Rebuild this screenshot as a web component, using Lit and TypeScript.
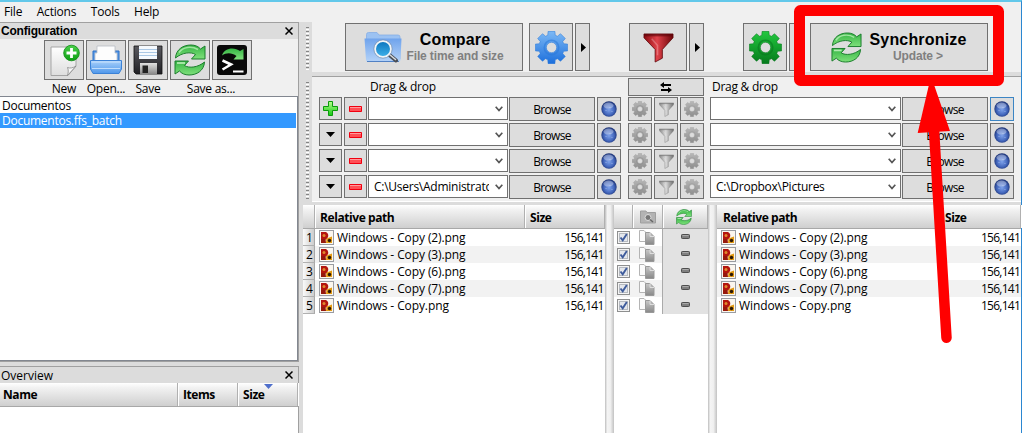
import { LitElement, html, css, svg } from "lit";
import { customElement } from "lit/decorators.js";

const gearPath = (() => {
  const pts: string[] = [];
  const teeth = 8;
  for (let i = 0; i < teeth; i++) {
    const base = (i * 360) / teeth;
    for (const [off, r] of [[-17, 12.4], [-12, 16], [12, 16], [17, 12.4]]) {
      const a = ((base + off - 90) * Math.PI) / 180;
      pts.push(`${(16 + r * Math.cos(a)).toFixed(2)} ${(16 + r * Math.sin(a)).toFixed(2)}`);
    }
  }
  return `M${pts.join("L")}ZM16 11a5 5 0 1 0 0 10a5 5 0 1 0 0-10Z`;
})();

const gear = (size: number, fill: string, edge: string) => html`
  <svg width=${size} height=${size} viewBox="0 0 32 32">
    <path d=${gearPath} fill=${fill} stroke=${edge} stroke-width=".5" fill-rule="evenodd" stroke-linejoin="round" />
    <circle cx="16" cy="16" r="7" fill="none" stroke=${edge} stroke-width="1.6" opacity=".55" />
  </svg>`;

const funnel = (size: number, fill: string, edge: string) => html`
  <svg width=${size} height=${size} viewBox="0 0 32 32">
    <path d="M1 2H31V6L20 18V27L12.500 31V18L1 6Z" fill=${fill} stroke=${edge} stroke-width=".8" />
    <path d="M1 2H31V4.500H1Z" fill=${edge} opacity=".6" />
    <path d="M9 7L15 14V24" fill="none" stroke="#fff" stroke-width="1.600" opacity=".25" />
  </svg>`;

const syncShape = svg`
  <path d="M1.500 14C2 5.500 9 1 17 1C21 1 24.500 2.500 26.500 5L31 2V15H17.500L21.500 10.500C17 7.500 8 8.500 1.500 14Z" fill="url(#sync)" stroke="#1b7d2c" stroke-width="1" stroke-linejoin="round" />
  <path d="M30.500 18C30 26.500 23 31 15 31C11 31 7.500 29.500 5.500 27L1 30V17H14.500L10.500 21.500C15 24.500 24 23.500 30.500 18Z" fill="url(#sync)" stroke="#1b7d2c" stroke-width="1" stroke-linejoin="round" />
  <path d="M5 8.500C9 3 17 1.500 24 5.500" fill="none" stroke="#c6f5c2" stroke-width="1.500" opacity=".7" />
  <path d="M3 19H11" fill="none" stroke="#e0fcd8" stroke-width="1.800" opacity=".7" />`;
const sync = (size: number) => html`<svg width=${size} height=${size} viewBox="0 0 32 32">${syncShape}</svg>`;

const newIcon = html`
  <svg width="32" height="34" viewBox="0 0 32 34">
    <path d="M3 4H28V23L20 32.500H3Z" fill="url(#paper)" stroke="#a5a5a5" />
    <path d="M19.500 32.500C20.500 29 20.500 27 19.500 24.500C22 25.500 25 25 28 23Z" fill="#f8f8f8" stroke="#888" stroke-width=".8" />
    <circle cx="23.500" cy="10" r="7.800" fill="url(#badge)" stroke="#0d8a12" stroke-width=".8" />
    <path d="M23.500 5V15M18.500 10H28.500" stroke="#fff" stroke-width="2.800" />
  </svg>`;

const openIcon = html`
  <svg width="34" height="32" viewBox="0 0 34 32">
    <path d="M4 7H30V18H4Z" fill="#5a9be8" stroke="#2b6fc4" />
    <path d="M8 2H26V9H28V20H6V9H8Z" fill="#fdfdfd" stroke="#b7bcc4" stroke-width=".8" />
    <path d="M1.500 16.500H32.500V25L30 29.500H4L1.500 25Z" fill="url(#tray)" stroke="#3c82d6" />
    <path d="M2.500 18H31.500M3 24.500H31" stroke="#d4e9ff" opacity=".8" />
  </svg>`;

const saveIcon = html`
  <svg width="30" height="32" viewBox="0 0 30 32">
    <path d="M1 2H29V30H3L1 28Z" fill="url(#disk)" stroke="#111" stroke-width=".8" />
    <path d="M6 2H24V15H6Z" fill="#f5f9fd" />
    <path d="M6 5.500H24M6 8.500H24M6 11.500H24" stroke="#aac8e5" />
    <path d="M7 19H24V30H7Z" fill="url(#steel)" />
    <path d="M9.500 21.500H15V29H9.500Z" fill="#222" />
  </svg>`;

const batchIcon = html`
  <svg width="32" height="32" viewBox="0 0 32 32">
    <rect x="1" y="1" width="30" height="30" rx="3" fill="#080808" />
    <path d="M6 11.500C8 4 18 2.500 24 7L27.500 5V15.500H17.500L20.500 12C16 8.500 10 8.500 6 11.500Z" fill="url(#sync)" />
    <path d="M6.500 16.500L15 20.500L6.500 25.500" fill="none" stroke="#fff" stroke-width="2.600" />
    <path d="M17 27.500H27.500" stroke="#fff" stroke-width="2" />
  </svg>`;

const compareIcon = html`
  <svg width="38" height="32" viewBox="0 0 38 32">
    <path d="M2.500 7V3.500Q2.500 1.500 4.500 1.500H13L15 4H34Q36 4 36 6V28H2.500Z" fill="#9cc2f2" stroke="#86afe6" stroke-width=".8" />
    <path d="M.5 7.500H37.500L36.500 29Q36.500 30.500 34 30.500H4Q2 30.500 2 29Z" fill="url(#folder)" />
    <path d="M3 30.500H35" stroke="#5181c4" />
    <path d="M25.500 24L32 29.500" stroke="#4a4e55" stroke-width="4" stroke-linecap="round" />
    <path d="M25.500 23.500L31.500 28.500" stroke="#d5d9de" stroke-width="1.600" stroke-linecap="round" />
    <circle cx="19" cy="18" r="8" fill="url(#lens)" stroke="#f1f5f8" stroke-width="2" />
    <circle cx="19" cy="18" r="9.200" fill="none" stroke="#7c93ad" stroke-width=".7" />
  </svg>`;

const globe = html`
  <svg width="16" height="16" viewBox="0 0 16 16">
    <circle cx="8" cy="8" r="7.700" fill="url(#globe)" />
    <ellipse cx="7.500" cy="4.600" rx="5" ry="3" fill="#fff" opacity=".35" />
    <path d="M4.500 9.500h1M10.500 10.500h1M8.500 6.500h1" stroke="#dce8ff" opacity=".45" />
  </svg>`;

const plus = html`
  <svg width="15" height="15" viewBox="0 0 15 15">
    <path d="M5.500 .5H9.500V5.500H14.500V9.500H9.500V14.500H5.500V9.500H.5V5.500H5.500Z" fill="url(#plus)" stroke="#0b9a0b" />
  </svg>`;
const minus = html`
  <svg width="13" height="6" viewBox="0 0 13 6">
    <path d="M.5 .5H12.500V5.500H.5Z" fill="#ff4f55" stroke="#f00010" />
    <path d="M1 1.500H12" stroke="#ff9a9c" />
  </svg>`;
const down = html`<svg width="9" height="5" viewBox="0 0 9 5"><path d="M0 0H9L4.500 5Z" /></svg>`;
const right = html`<svg width="5" height="9" viewBox="0 0 5 9"><path d="M0 0L5 4.500L0 9Z" /></svg>`;
const chevron = html`
  <svg width="8" height="6" viewBox="0 0 8 6"><path d="M.7 .8L4 4.500L7.300 .8" fill="none" stroke="#555" stroke-width="1.700" /></svg>`;
const swap = html`
  <svg width="12" height="11" viewBox="0 0 12 11">
    <path d="M0 3L4 0V2H11V4H4V6ZM12 8L8 5V7H1V9H8V11Z" />
  </svg>`;
const cross = html`
  <svg width="8" height="8" viewBox="0 0 8 8"><path d="M.5 .5L7.500 7.500M7.500 .5L.5 7.500" stroke="#000" stroke-width="1.500" /></svg>`;

const fileIcon = html`
  <svg width="15" height="15" viewBox="0 0 15 15">
    <rect x=".5" y=".5" width="14" height="14" fill="#fbf6ee" stroke="#9a9ca1" />
    <path d="M2 2H7Q10 3.500 9 7L7.500 9.500H2Z" fill="#b3150e" />
    <circle cx="5" cy="5.500" r="1.500" fill="#e08a2c" />
    <path d="M7.500 8.500L13 6.500V13H7Z" fill="#e39a12" />
    <path d="M2 9H6.500L7 13H2Z" fill="#96180c" />
    <circle cx="10.500" cy="10.500" r="1.700" fill="#2a1605" />
  </svg>`;

const checkbox = html`
  <svg width="13" height="13" viewBox="0 0 13 13">
    <rect x=".5" y=".5" width="12" height="12" fill="#f4f4f4" stroke="#8e8f8f" />
    <rect x="2.500" y="2.500" width="8" height="8" fill="#e4e7ec" stroke="#b6bac0" />
    <path d="M3.500 6.500L5.700 9.300L9.800 3" fill="none" stroke="#3f5c9c" stroke-width="1.900" />
  </svg>`;

const copies = html`
  <svg width="16" height="15" viewBox="0 0 16 15">
    <path d="M.5 .5H5L7.500 3V11.500H.5Z" fill="#fbfbfb" stroke="#b4b4b4" />
    <path d="M6.500 2.500H11L15 6.500V14.500H6.500Z" fill="url(#copy)" stroke="#999" />
    <path d="M11 2.500V6.500H15" fill="none" stroke="#ddd" />
  </svg>`;

const equalBar = html`
  <svg width="9" height="5" viewBox="0 0 9 5">
    <rect x=".5" y=".5" width="8" height="4" rx=".8" fill="#808080" stroke="#4e4e4e" />
    <path d="M1.500 1.500H7.500" stroke="#aaa" />
  </svg>`;

const cameraIcon = html`
  <svg width="16" height="14" viewBox="0 0 16 14">
    <path d="M.5 1H6L7 2.500H15.500V13H.5Z" fill="#b3b3b3" stroke="#9f9f9f" />
    <circle cx="8" cy="7.500" r="3" fill="#777" stroke="#ddd" />
    <path d="M10 9.500L13 12" stroke="#666" stroke-width="1.500" />
  </svg>`;

const gradient = (id: string, from: string, to: string) => svg`
  <linearGradient id=${id} x1="0" y1="0" x2="0" y2="1">
    <stop offset="0" stop-color=${from} /><stop offset="1" stop-color=${to} />
  </linearGradient>`;

const files = [
  "Windows - Copy (2).png",
  "Windows - Copy (3).png",
  "Windows - Copy (6).png",
  "Windows - Copy (7).png",
  "Windows - Copy.png",
];
const pairs = [
  ["", ""],
  ["", ""],
  ["", ""],
  ["C:\\Users\\Administrator", "C:\\Dropbox\\Pictures"],
];

@customElement("app-root")
export class AppRoot extends LitElement {
  static styles = css`
    :host {
      display: block; position: relative; width: 1022px; height: 433px; overflow: hidden;
      box-sizing: border-box; background: #f0f0f0; color: #000;
      font: 12px/17px "Open Sans", "Noto Sans", sans-serif; letter-spacing: -0.26px; white-space: nowrap;
    }
    *, *::before { box-sizing: border-box; }
    svg { display: block; flex: none; }
    .defs { position: absolute; width: 0; height: 0; }
    .window { height: 433px; border-top: 2px solid #62c8ea; border-right: 1px solid #2b87d1; display: flex; flex-direction: column; }
    .menu { height: 20px; display: flex; gap: 14.5px; padding: 1px 0 0 4px; flex: none; letter-spacing: -0.2px; }
    .body { flex: 1; display: flex; min-height: 0; }

    .side { width: 303px; background: #dcdcdc; padding-right: 4px; display: flex; flex-direction: column; gap: 4px; flex: none; }
    .pane { border: 1px solid #a0a0a0; border-left: 0; display: flex; flex-direction: column; background: #f0f0f0; }
    .config { height: 340px; }
    .overview { height: 67px; border-bottom: 0; background: #fff; }
    .caption { height: 16px; background: #dcdcdc; display: flex; align-items: center; justify-content: space-between; padding: 0 5px 0 1px; flex: none; }
    .overview .caption { letter-spacing: 0; }
    .caption.bold { font: bold 12px/16px "Liberation Sans", sans-serif; letter-spacing: -0.2px; }
    .tools { height: 57px; padding: 1px 0 0 44px; display: grid; grid-template: 40px 16px / repeat(5, 40px); column-gap: 2px; text-align: center; flex: none; }
    .btn { border: 1px solid #707070; background: #dddddd; display: flex; align-items: center; justify-content: center; flex: none; }
    .wide { grid-column: span 2; }
    .tools .label { line-height: 18px; }
    .list { flex: 1; border: 1px solid #828790; border-left: 0; background: #fff; padding-right: 1px; }
    .item { height: 16px; line-height: 17px; padding-left: 2px; }
    .item.on { height: 15px; line-height: 16px; background: #3399ff; color: #fff; }

    .head { height: 23px; background: linear-gradient(#ffffff, #f2f2f2 20%, #cfcfcf); border-bottom: 1px solid #a8a8a8; display: flex; font-weight: bold; flex: none; letter-spacing: -0.42px; }
    .head > div { border-right: 1px solid #b0b0b0; box-shadow: 1px 0 #fff; padding: 3px 0 0 5px; display: flex; }
    .tick { margin-left: -1px; }
    .overview .head { height: 24px; }
    .overview .head > div { padding-left: 3px; }
    .overview .head > .c2, .overview .head > .c3 { padding-left: 5px; }
    .c1 { width: 178px; } .c2 { width: 60px; } .c3 { flex: 1; }

    .main { flex: 1; display: flex; flex-direction: column; background: #dcdcdc; min-width: 0; }
    .bar { display: flex; }
    .grip { width: 9px; padding: 5px 0 0 3px; flex: none; }
    .dots { width: 3px; height: 44px; background: repeating-linear-gradient(#858585 0 1px, #dcdcdc 1px 2px, #fff 2px 3px, #dcdcdc 3px 4px); }
    .dots.long { height: 118px; margin-top: 1px; }
    .actions { height: 50px; margin-bottom: 4px; }
    .strip { flex: 1; background: #f0f0f0; display: flex; padding: 1px 0 0 33px; }
    .big { width: 178px; height: 48px; }
    .gearbtn { width: 44px; height: 48px; margin-left: 6px; }
    .more { width: 15px; height: 48px; margin-left: 2px; padding-right: 0; padding-left: 2px; }
    .filter { width: 58px; height: 48px; margin-left: 39px; }
    .green { margin-left: 39px; }
    .sync { margin-left: 6px; gap: 7px; }
    .compare { gap: 4px; }
    .words { text-align: center; font: bold 12px/14px "Liberation Sans", sans-serif; color: #808080; letter-spacing: -0.13px; }
    .title { font-size: 16px; line-height: 19px; color: #000; letter-spacing: 0.17px; margin-top: -1px; }

    .folders { height: 126px; }
    .pairs { flex: 1; background: #f0f0f0; border-top: 1px solid #a0a0a0; border-bottom: 1px solid #fff; padding: 1px 0 0 7px; }
    .titles { height: 18px; display: flex; margin-bottom: 1px; }
    .left-title { width: 309px; padding: 0 0 0 51px; }
    .swap { width: 76px; height: 18px; }
    .right-title { padding-left: 8px; }
    .pair { height: 23px; margin-bottom: 3px; display: flex; }
    .sm { width: 23px; height: 23px; margin-right: 2px; }
    .combo { height: 23px; border: 1px solid #707070; background: #fff; display: flex; align-items: center; justify-content: space-between; padding: 0 4px 0 5px; margin: 0 1px 0 -1px; flex: none; }
    .combo span { overflow: hidden; margin-top: -1px; }
    .cl { width: 140px; } .cr { width: 191px; margin-left: 6px; }
    .cl span { width: 115px; }
    .browse { width: 86px; height: 24px; margin-right: 2px; letter-spacing: -0.65px; }
    .sq { width: 24px; height: 24px; }
    .sq + .sq { margin-left: 2px; }
    .mid { display: flex; margin-left: 7px; }
    .focus { border-color: #3c85c4; }

    .grids { flex: 1; display: flex; padding-top: 3px; background: #fff; box-shadow: inset 0 3px #dcdcdc; }
    .grid { background: #fff; }
    .grid > .head { height: 24px; }
    .grid .head > div { padding-top: 4px; }
    .lg { width: 302px; } .cg { width: 94px; } .rg { flex: 1; }
    .split { width: 9px; background: linear-gradient(90deg, #bdbdbd, #f4f4f4 25%, #f0f0f0 60%, #c2c2c2); flex: none; }
    .row { height: 17px; display: flex; align-items: center; line-height: 18px; }
    .row:nth-child(odd) { background: #f2f2f2; }
    .num { width: 12px; height: 17px; background: linear-gradient(90deg, #fafafa, #cdcdcd); border-right: 1px solid #a8a8a8; border-bottom: 1px solid #b0b0b0; padding-left: 3px; line-height: 17px; margin-right: 4px; }
    .name { flex: 1; padding-left: 3px; letter-spacing: -0.1px; }
    .size { padding-right: 1.5px; letter-spacing: -0.75px; }
    .rg .row { padding-left: 4px; }
    .rg .size { padding-right: 1px; }
    .h0 { width: 12px; } .h1 { width: 210px; } .h2 { flex: 1; }
    .hr { width: 223px; }
    .grid .head > .hr { padding-left: 6px; }
    .lg .head > .h0 { padding: 0; }
    .cg .head > div { padding: 5px 0 0; justify-content: center; }
    .cg .head > .k3 { padding-top: 4px; padding-right: 2px; }
    .k1 { width: 19px; } .k2 { width: 30px; } .k3 { flex: 1; }
    .cg .row { padding-left: 3px; }
    .cp { margin-left: 9px; }
    .eq { margin-left: auto; width: 46px; height: 17px; background: #e2e2e2; border-left: 1px solid #aaa; display: flex; justify-content: center; padding: 5px 0 0; }
    .note { position: absolute; left: 0; top: 0; }
  `;

  private combo(cls: string, value: string) {
    return html`<div class="combo ${cls}"><span>${value}</span>${chevron}</div>`;
  }

  private fileGrid(numbered: boolean) {
    return html`
      <div class="head">
        ${numbered ? html`<div class="h0"></div>` : ""}
        <div class=${numbered ? "h1" : "hr"}>Relative path</div>
        <div class="h2">Size</div>
      </div>
      ${files.map((name, i) => html`
        <div class="row">
          ${numbered ? html`<div class="num">${i + 1}</div>` : ""}
          ${fileIcon}<div class="name">${name}</div><div class="size">156,141</div>
        </div>`)}`;
  }

  render() {
    return html`
      <svg class="defs"><defs>
        ${gradient("sync", "#35b544", "#7fe07b")}
        ${gradient("paper", "#ffffff", "#dedede")}
        ${gradient("badge", "#4bd04b", "#0c9f12")}
        ${gradient("tray", "#a9d1fb", "#4f97ea")}
        ${gradient("disk", "#5a5a60", "#202024")}
        ${gradient("steel", "#e0e0e0", "#8a8a8a")}
        ${gradient("folder", "#6fa3ec", "#b3d2f8")}
        ${gradient("lens", "#0a74bd", "#3fb2ea")}
        ${gradient("plus", "#b9ff8c", "#14c814")}
        ${gradient("copy", "#c8c8c8", "#888888")}
        ${gradient("blueGear", "#7db9f5", "#1c6fdc")}
        ${gradient("greenGear", "#22c83e", "#057a1c")}
        ${gradient("grayGear", "#b8b8b8", "#8d8d8d")}
        <linearGradient id="red"><stop offset="0" stop-color="#8c0a10" /><stop offset=".45" stop-color="#e0424a" /><stop offset="1" stop-color="#6d0509" /></linearGradient>
        <linearGradient id="gray"><stop offset="0" stop-color="#8c8c8c" /><stop offset=".45" stop-color="#dadada" /><stop offset="1" stop-color="#707070" /></linearGradient>
        <radialGradient id="globe" cx=".5" cy=".55" r=".55"><stop offset="0" stop-color="#7ea2ea" /><stop offset=".6" stop-color="#4468be" /><stop offset="1" stop-color="#1a2f70" /></radialGradient>
      </defs></svg>
      <div class="window">
        <div class="menu"><span>File</span><span>Actions</span><span>Tools</span><span>Help</span></div>
        <div class="body">
          <div class="side">
            <div class="pane config">
              <div class="caption bold">Configuration ${cross}</div>
              <div class="tools">
                <div class="btn">${newIcon}</div><div class="btn">${openIcon}</div><div class="btn">${saveIcon}</div>
                <div class="btn">${sync(32)}</div><div class="btn">${batchIcon}</div>
                <div class="label">New</div><div class="label">Open...</div><div class="label">Save</div>
                <div class="label wide">Save as...</div>
              </div>
              <div class="list"><div class="item">Documentos</div><div class="item on">Documentos.ffs_batch</div></div>
            </div>
            <div class="pane overview">
              <div class="caption">Overview ${cross}</div>
              <div class="head">
                <div class="c1">Name</div><div class="c2">Items</div>
                <div class="c3">Size<svg class="tick" width="9" height="5" viewBox="0 0 9 5" style="margin-top:-2px"><path d="M0 0H9L4.500 5Z" fill="#4f6fcb" /></svg></div>
              </div>
            </div>
          </div>
          <div class="main">
            <div class="bar actions">
              <div class="grip"><div class="dots"></div></div>
              <div class="strip">
                <div class="btn big compare">${compareIcon}<div class="words"><div class="title">Compare</div>File time and size</div></div>
                <div class="btn gearbtn">${gear(33, "url(#blueGear)", "#2a78d8")}</div>
                <div class="btn more">${right}</div>
                <div class="btn filter">${funnel(31, "url(#red)", "#5c0408")}</div>
                <div class="btn more">${right}</div>
                <div class="btn gearbtn green">${gear(33, "url(#greenGear)", "#08751e")}</div>
                <div class="btn more">${right}</div>
                <div class="btn big sync">${sync(31)}<div class="words"><div class="title">Synchronize</div>Update &gt;</div></div>
              </div>
            </div>
            <div class="bar folders">
              <div class="grip"><div class="dots long"></div></div>
              <div class="pairs">
                <div class="titles">
                  <div class="left-title">Drag &amp; drop</div>
                  <div class="btn swap">${swap}</div>
                  <div class="right-title">Drag &amp; drop</div>
                </div>
                ${pairs.map(([a, b], i) => html`
                  <div class="pair">
                    <div class="btn sm">${i === 0 ? plus : down}</div>
                    <div class="btn sm">${minus}</div>
                    ${this.combo("cl", a)}
                    <div class="btn browse">Browse</div>
                    <div class="btn sq">${globe}</div>
                    <div class="mid">
                      <div class="btn sq">${gear(16, "url(#grayGear)", "#888")}</div>
                      <div class="btn sq">${funnel(15, "url(#gray)", "#777")}</div>
                      <div class="btn sq">${gear(16, "url(#grayGear)", "#999")}</div>
                    </div>
                    ${this.combo("cr", b)}
                    <div class="btn browse">Browse</div>
                    <div class="btn sq ${i === 0 ? "focus" : ""}">${globe}</div>
                  </div>`)}
              </div>
            </div>
            <div class="grids">
              <div class="grid lg">${this.fileGrid(true)}</div>
              <div class="split"></div>
              <div class="grid cg">
                <div class="head"><div class="k1"></div><div class="k2">${cameraIcon}</div><div class="k3">${sync(16)}</div></div>
                ${files.map(() => html`<div class="row">${checkbox}<div class="cp">${copies}</div><div class="eq">${equalBar}</div></div>`)}
              </div>
              <div class="split"></div>
              <div class="grid rg">${this.fileGrid(false)}</div>
            </div>
          </div>
        </div>
      </div>
      <svg class="note" width="1022" height="433" viewBox="0 0 1022 433">
        <rect x="799.500" y="10.500" width="199" height="70" rx="1" fill="none" stroke="#f00" stroke-width="11" stroke-linejoin="round" />
        <path d="M931 76L950 131L917.700 133Z" fill="#f00" />
        <path d="M934 130L946.500 337.800" stroke="#f00" stroke-width="10.500" stroke-linecap="round" />
      </svg>`;
  }
}
